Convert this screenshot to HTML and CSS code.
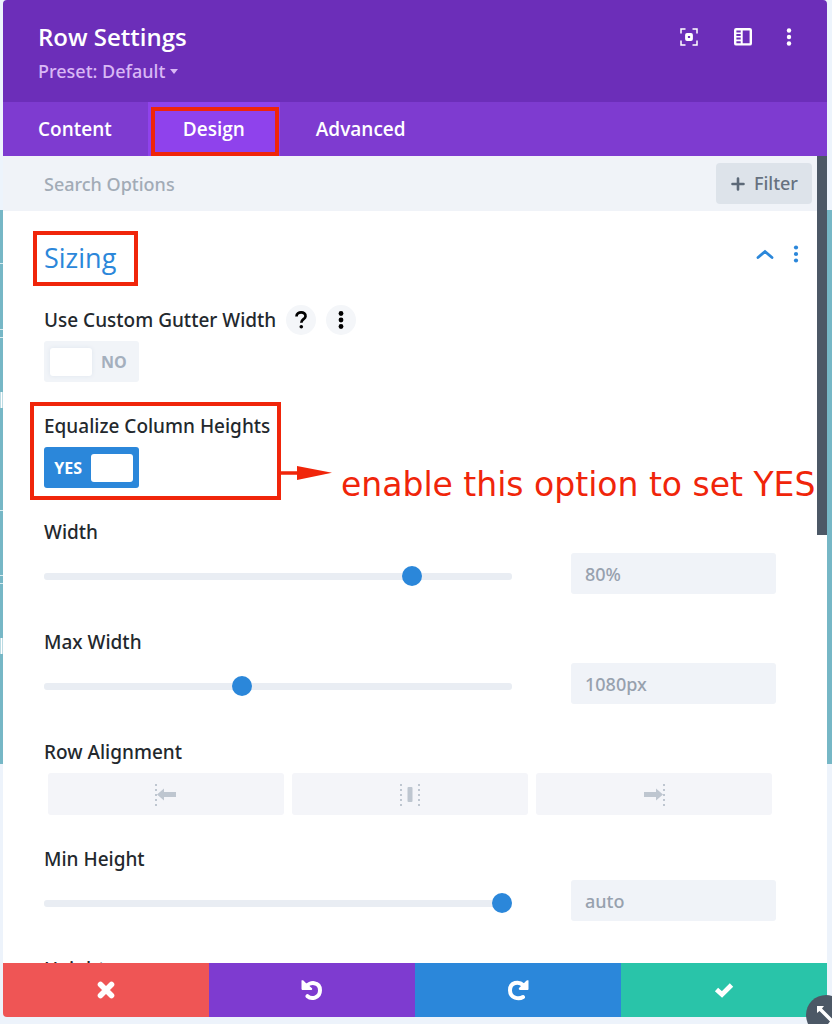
FILE: index.html
```html
<!DOCTYPE html>
<html lang="en">
<head>
<meta charset="utf-8">
<meta name="viewport" content="width=device-width, initial-scale=1">
<title>Row Settings</title>
<link rel="stylesheet" href="styles.css">
</head>
<body>
<svg class="backdrop" width="3" height="764" aria-hidden="true">
  <rect y="210" width="3" height="554" fill="#76b7c6"/>
  <path d="M0 263.500h3M0 510.500h3M0 337.500h3M0 583.500h3M0 329.500h3M0 575.500h3" stroke="#d9edf1" fill="none"/>
  <path d="M1.500 392v16M1.500 638v16" stroke="#fff" stroke-width="2"/>
</svg>
<main class="modal">
  <header class="modal-header">
    <div class="heading">
      <h1>Row Settings</h1>
      <button class="preset" type="button">Preset: Default <span class="caret"></span></button>
    </div>
    <div class="header-actions">
      <button type="button" aria-label="Expand">
        <svg width="18" height="18" viewBox="0 0 18 18" fill="none" stroke="#fff"><path stroke-width="1.500" d="M1 5.500V1h4.500M12.500 1H17v4.500M17 12.500V17h-4.500M5.500 17H1v-4.500"/><rect x="6.500" y="6.500" width="5" height="5" rx=".5" stroke-width="2.800"/></svg>
      </button>
      <button type="button" aria-label="Dock panel">
        <svg width="18" height="18" viewBox="0 0 18 18"><rect x="1.200" y="1.200" width="15.600" height="15.200" rx="1" fill="none" stroke="#fff" stroke-width="2.400"/><path d="M7.700 1v15" stroke="#fff" stroke-width="2"/><path d="M2 5.200h5M2 8.800h5M2 12.400h5" stroke="#fff" stroke-width="1.600"/></svg>
      </button>
      <button type="button" aria-label="More">
        <svg width="6" height="18" viewBox="0 0 6 18" fill="#fff"><circle cx="3" cy="2.500" r="2.200"/><circle cx="3" cy="9" r="2.200"/><circle cx="3" cy="15.500" r="2.200"/></svg>
      </button>
    </div>
  </header>
  <nav class="tabs">
    <button type="button">Content</button>
    <button type="button" class="active">Design<span class="mark mark-tab"></span></button>
    <button type="button">Advanced</button>
  </nav>
  <div class="scroll-area">
    <div class="pane">
      <div class="search-bar">
        <input type="text" placeholder="Search Options" aria-label="Search Options">
        <button type="button" class="filter">
          <svg width="14" height="14" viewBox="0 0 14 14" stroke="#5c6978" stroke-width="2.600" stroke-linecap="round"><path d="M7 1.500v11M1.500 7h11"/></svg>
          Filter
        </button>
      </div>
      <section class="options">
        <div class="section-header">
          <h2>Sizing<span class="mark mark-title"></span></h2>
          <div class="section-actions">
            <button type="button" aria-label="Collapse"><svg width="18" height="10" viewBox="0 0 18 10" fill="none" stroke="#2b87da" stroke-width="2.800" stroke-linecap="round"><path d="M2 8.500 9 2.500l7 6"/></svg></button>
            <button type="button" aria-label="Section options"><svg width="6" height="18" viewBox="0 0 6 18" fill="#2b87da"><circle cx="3" cy="2.500" r="2.100"/><circle cx="3" cy="9" r="2.100"/><circle cx="3" cy="15.500" r="2.100"/></svg></button>
          </div>
        </div>

        <div class="field">
          <div class="label-row">
            <label for="gutter">Use Custom Gutter Width</label>
            <button type="button" class="round" aria-label="Help"><svg width="14" height="18" viewBox="0 0 14 18"><path d="M2.500 5.500C2.500 0 12 .2 11.500 5.300 11.200 8.300 7.300 8.200 7.300 11.800" fill="none" stroke="#000" stroke-width="2.700"/><circle cx="7.300" cy="15.700" r="1.800"/></svg></button>
            <button type="button" class="round" aria-label="Field options"><svg width="6" height="18" viewBox="0 0 6 18"><circle cx="3" cy="2.500" r="2.400"/><circle cx="3" cy="9" r="2.400"/><circle cx="3" cy="15.500" r="2.400"/></svg></button>
          </div>
          <label class="toggle"><input type="checkbox" id="gutter"><span class="knob"></span><span>NO</span></label>
        </div>

        <div class="field noted">
          <label class="name" for="equalize">Equalize Column Heights</label>
          <label class="toggle on"><input type="checkbox" id="equalize" checked><span>YES</span><span class="knob"></span></label>
          <span class="mark mark-field"></span>
          <div class="note">
            <svg width="52" height="14" viewBox="0 0 52 14" fill="#f0250a"><path d="M0 5.200h17V0l35 6.800L17 14V8.800H0z"/></svg>
            <p>enable this option to set YES</p>
          </div>
        </div>

        <div class="field slider-field">
          <label class="name" for="width">Width</label>
          <div class="control"><input type="range" id="width" value="80"><input type="text" placeholder="80%" aria-label="Width value"></div>
        </div>

        <div class="field slider-field">
          <label class="name" for="max-width">Max Width</label>
          <div class="control"><input type="range" id="max-width" value="42"><input type="text" placeholder="1080px" aria-label="Max Width value"></div>
        </div>

        <div class="field" role="group" aria-labelledby="align">
          <span class="name" id="align">Row Alignment</span>
          <div class="alignment">
            <button type="button" aria-label="Left"><svg width="24" height="24" viewBox="0 0 24 24"><path class="dots" d="M2 2v22"/><path class="shape" d="M3 12.500l7-6v3.500h12v5H10v3.500z"/></svg></button>
            <button type="button" aria-label="Center"><svg width="24" height="24" viewBox="0 0 24 24"><path class="dots" d="M3 2v22M21 2v22"/><rect class="shape" x="9.500" y="5" width="5" height="15" rx="1"/></svg></button>
            <button type="button" aria-label="Right"><svg width="24" height="24" viewBox="0 0 24 24"><path class="dots" d="M22 2v22"/><path class="shape" d="M21 12.500l-7-6v3.500H2v5h12v3.500z"/></svg></button>
          </div>
        </div>

        <div class="field slider-field">
          <label class="name" for="min-height">Min Height</label>
          <div class="control"><input type="range" id="min-height" value="100"><input type="text" placeholder="auto" aria-label="Min Height value"></div>
        </div>

        <div class="field slider-field">
          <label class="name" for="height">Height</label>
          <div class="control"><input type="range" id="height" value="100"><input type="text" placeholder="auto" aria-label="Height value"></div>
        </div>
      </section>
    </div>
    <div class="scrollbar"><div class="thumb"></div></div>
  </div>
  <footer class="modal-footer">
    <button type="button" class="cancel" aria-label="Discard"><svg width="18" height="18" viewBox="0 0 18 18"><path d="M3.500 3.500l11 11M14.500 3.500l-11 11" stroke="#fff" stroke-width="5.600" stroke-linecap="round"/></svg></button>
    <button type="button" class="undo" aria-label="Undo"><svg width="22" height="22" viewBox="0 0 22 22"><path d="M5.500 7.500C8 2.800 19 2 19 11.300 19 19.500 10 20.500 6.500 17.200" fill="none" stroke="#fff" stroke-width="4" stroke-linecap="round"/><path d="M.5 1.500c1-.6 2.500 0 3 1.200L11 9.200c.6.800 0 1.800-1 1.800H2c-1 0-1.500-.5-1.500-1.500z" fill="#fff"/></svg></button>
    <button type="button" class="redo" aria-label="Redo"><svg width="22" height="22" viewBox="0 0 22 22"><path d="M16 6C12 2 3 3 3 11.300 3 19.500 12 20.500 16 18" fill="none" stroke="#fff" stroke-width="4" stroke-linecap="round"/><path d="M21.500 1.500c-1-.6-2 0-2.700.8L12 9c-.6.900 0 2 1 2h7.500c.7 0 1-.5 1-1z" fill="#fff"/></svg></button>
    <button type="button" class="save" aria-label="Save"><svg width="20" height="16" viewBox="0 0 20 16"><path d="M2.500 7.500l5.500 5L17.500 3" fill="none" stroke="#fff" stroke-width="4.800"/></svg></button>
  </footer>
  <button type="button" class="resize" aria-label="Resize"><svg width="24" height="24" viewBox="0 0 24 24" fill="#fff"><path d="M3 3h7L8 5.500 18.500 16 21 14v7h-7l2-2.500L5.500 8 3 10z"/></svg></button>
</main>
</body>
</html>
```
FILE: styles.css
```css
* { box-sizing: border-box; }

body {
  margin: 0;
  height: 100vh;
  overflow: hidden;
  position: relative;
  display: flex;
  background: linear-gradient(#edf4fc 210px, #76b7c6 210px, #76b7c6 764px, #edf3fb 764px);
  font-family: "Noto Sans", "Open Sans", sans-serif;
  font-size: 18px;
  font-weight: 500;
  color: #23282d;
}

button, input { font: inherit; color: inherit; border: 0; margin: 0; padding: 0; background: none; }
button { cursor: pointer; }
svg { display: block; }
h1, h2, p { margin: 0; }

.backdrop { position: absolute; left: 0; top: 0; }

.modal {
  position: relative;
  flex: 1;
  min-width: 0;
  margin: 0 5px 7px 3px;
  display: flex;
  flex-direction: column;
}

.modal-header {
  display: flex;
  justify-content: space-between;
  align-items: flex-start;
  padding: 20px 35px 18px;
  background: #6c2eb9;
  border-radius: 4px 4px 0 0;
  color: #fff;
}
.heading { display: flex; flex-direction: column; align-items: flex-start; gap: 4px; }
h1, h2, .tabs, .toggle { font-family: "Open Sans", "Noto Sans", sans-serif; }
h1 { font-size: 24px; line-height: 34px; font-weight: 600; }
.preset { display: flex; align-items: center; gap: 5px; line-height: 26px; color: #d9b8f5; }
.caret { border: 4px solid transparent; border-top: 5px solid #d9b8f5; border-bottom: 0; }
.header-actions { display: flex; gap: 36px; padding-top: 8px; }
.header-actions button:last-child { margin-left: -2px; }

.tabs { display: flex; gap: 1px; background: #7e3bd0; color: #fff; font-size: 19px; font-weight: 600; }
.tabs button { position: relative; padding: 0 35px; line-height: 54px; }
.tabs .active { background: #8f42ec; }

.mark { position: absolute; border: 4px solid #f0250a; pointer-events: none; }
.mark-tab { inset: 5px 1px 0 3px; }
.mark-title { inset: -6px -22px -7px -11px; }
.mark-field { top: -11px; left: -14px; width: 251px; height: 98px; }

.scroll-area { flex: 1; min-height: 0; display: flex; background: #fff; }
.pane { flex: 1; min-width: 0; overflow: hidden; }
.scrollbar { width: 10px; }
.thumb { height: 47%; background: #4c5866; }

.search-bar {
  display: flex;
  align-items: center;
  justify-content: space-between;
  padding: 7px 5px 7px 41px;
  background: #f0f3f8;
}
.search-bar input { flex: 1; min-width: 0; outline: 0; }
.search-bar input::placeholder { color: #a2abb6; opacity: 1; }
.filter {
  display: flex;
  align-items: center;
  gap: 9px;
  padding: 0 14px 0 15px;
  line-height: 41px;
  background: #dde3ea;
  border-radius: 4px;
  color: #66717f;
}

.options { padding: 26px 41px 0; display: flex; flex-direction: column; }
.section-header { display: flex; justify-content: space-between; margin-bottom: 28px; }
h2 { position: relative; font-size: 27px; line-height: 42px; font-weight: 400; color: #2b87da; }
.section-actions { display: flex; align-items: center; gap: 19px; height: 34px; margin-right: -23px; }

.field { position: relative; display: flex; flex-direction: column; gap: 8px; margin-bottom: 31px; }
.slider-field { margin-bottom: 35px; }
.name, .label-row { font-size: 19px; line-height: 26px; height: 26px; }
.label-row { display: flex; align-items: center; gap: 10px; }
.round {
  width: 30px;
  height: 30px;
  display: grid;
  place-items: center;
  border-radius: 50%;
  background: #f4f6f9;
}

.toggle {
  align-self: flex-start;
  display: flex;
  align-items: center;
  gap: 9px;
  width: 95px;
  height: 41px;
  padding: 6px;
  border-radius: 3px;
  background: #f1f4f8;
  color: #a4afbd;
  font-size: 16px;
  font-weight: 700;
}
.toggle input { position: absolute; opacity: 0; }
.knob { width: 42px; height: 28px; border-radius: 3px; background: #fff; box-shadow: 0 0 4px #dfe6ee; }
.toggle.on { background: #2b87da; color: #fff; justify-content: flex-end; }
.on .knob { box-shadow: none; }

.note {
  position: absolute;
  left: 236px;
  top: 53px;
  display: flex;
  align-items: flex-start;
  gap: 9px;
  color: #f0250a;
  white-space: nowrap;
}
.note p { font-family: "DejaVu Sans", sans-serif; font-size: 33px; font-weight: 400; line-height: 38px; }

.control { display: flex; align-items: center; gap: 59px; }
.control input[type="text"] {
  width: 205px;
  height: 41px;
  padding: 0 14px;
  border-radius: 3px;
  background: #f0f3f8;
}
.control input::placeholder { color: #97a1ae; opacity: 1; }
input[type="range"] { appearance: none; flex: 1; min-width: 0; height: 20px; margin-top: 6px; }
input[type="range"]::-webkit-slider-runnable-track { height: 7px; border-radius: 3px; background: #e9edf3; }
input[type="range"]::-webkit-slider-thumb {
  appearance: none;
  width: 20px;
  height: 20px;
  margin-top: -7px;
  border-radius: 50%;
  background: #2b87da;
}

.alignment { display: flex; gap: 8px; padding: 0 4px; }
.alignment button {
  flex: 1;
  height: 42px;
  display: grid;
  place-items: center;
  border-radius: 3px;
  background: #f4f5f9;
}
.dots { fill: none; stroke: #bec6d0; stroke-width: 2; stroke-dasharray: 2 3; }
.shape { fill: #bec6d0; }

.modal-footer { display: flex; height: 54px; border-radius: 0 0 4px 4px; overflow: hidden; }
.modal-footer button { flex: 1; display: grid; place-items: center; }
.cancel { background: #ef5555; }
.undo { background: #7e3bd0; }
.redo { background: #2b87da; }
.save { background: #29c4a9; }

.resize {
  position: absolute;
  right: -19px;
  bottom: -18px;
  width: 40px;
  height: 40px;
  display: grid;
  place-items: center;
  border-radius: 50%;
  background: #4c5866;
}
```
